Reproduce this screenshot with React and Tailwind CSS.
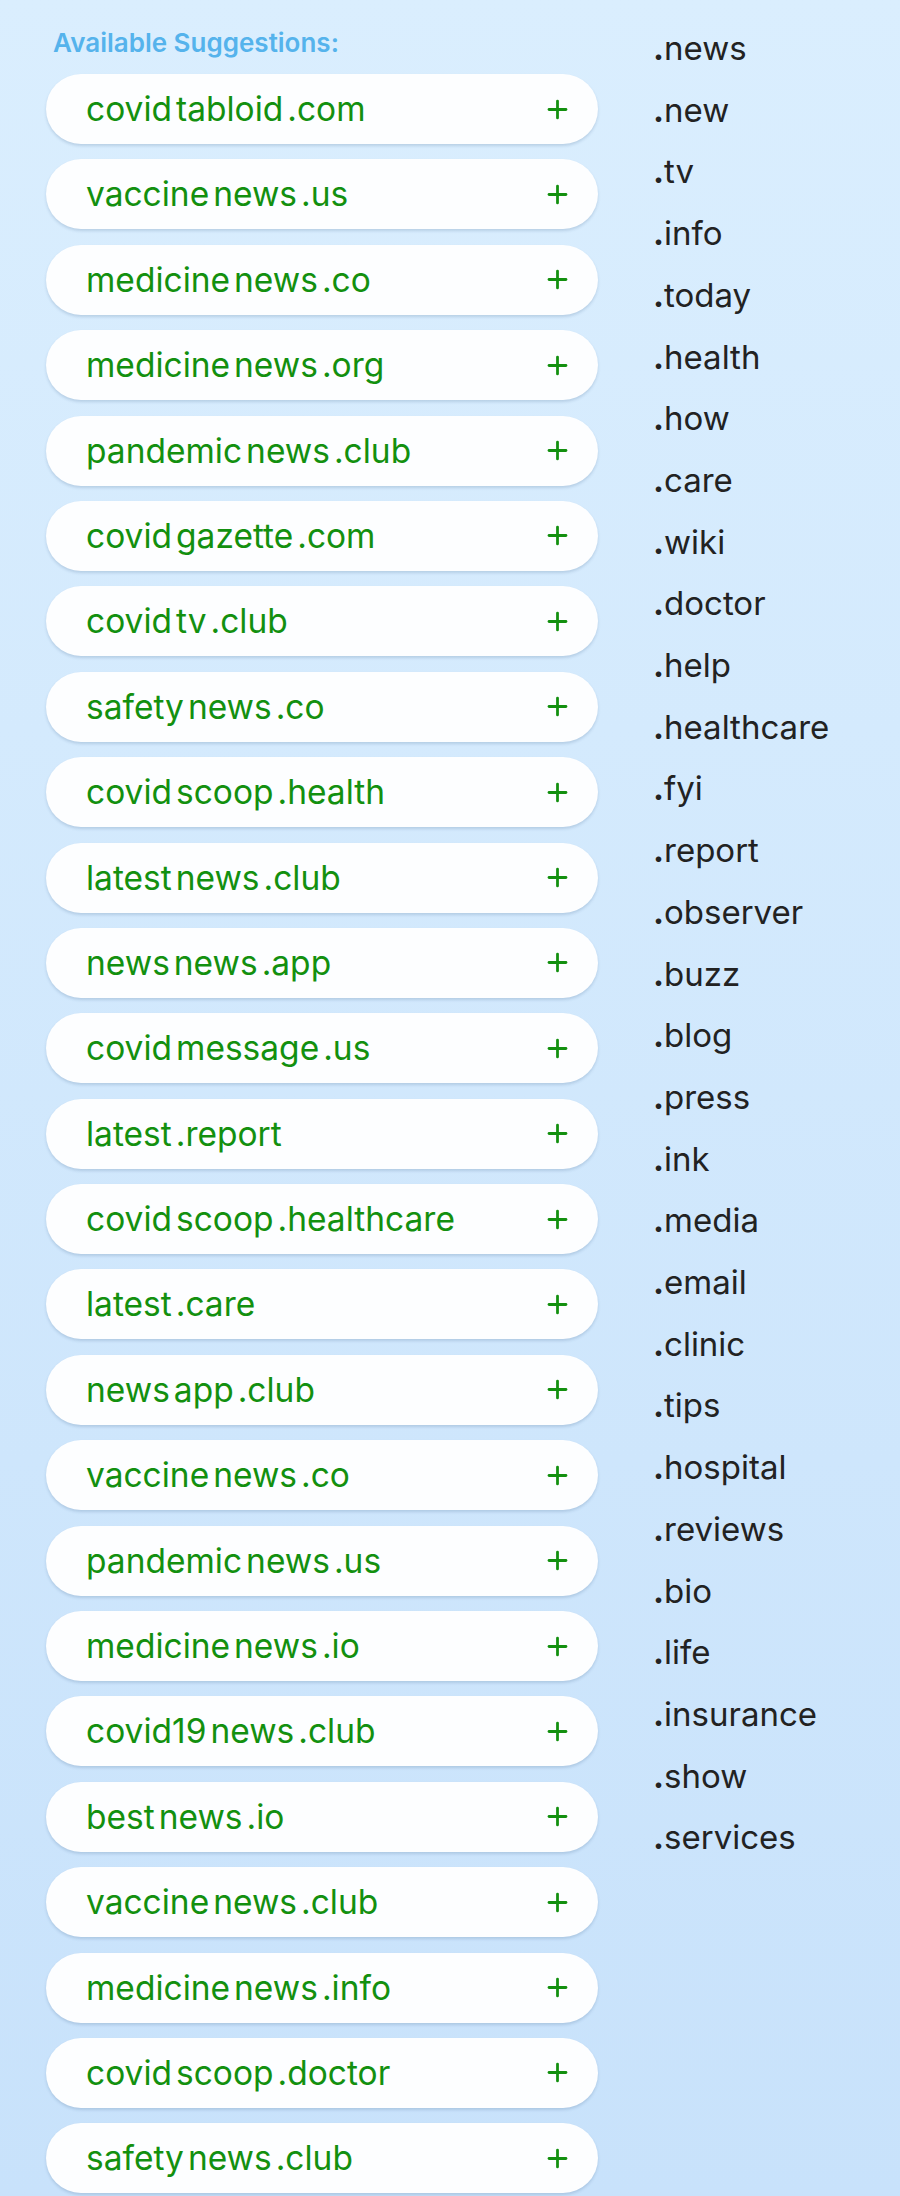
import React from "react";
import { Plus } from "lucide-react";

const suggestions = [
  ["covid", "tabloid", ".com"],
  ["vaccine", "news", ".us"],
  ["medicine", "news", ".co"],
  ["medicine", "news", ".org"],
  ["pandemic", "news", ".club"],
  ["covid", "gazette", ".com"],
  ["covid", "tv", ".club"],
  ["safety", "news", ".co"],
  ["covid", "scoop", ".health"],
  ["latest", "news", ".club"],
  ["news", "news", ".app"],
  ["covid", "message", ".us"],
  ["latest", ".report"],
  ["covid", "scoop", ".healthcare"],
  ["latest", ".care"],
  ["news", "app", ".club"],
  ["vaccine", "news", ".co"],
  ["pandemic", "news", ".us"],
  ["medicine", "news", ".io"],
  ["covid19", "news", ".club"],
  ["best", "news", ".io"],
  ["vaccine", "news", ".club"],
  ["medicine", "news", ".info"],
  ["covid", "scoop", ".doctor"],
  ["safety", "news", ".club"],
];

const tlds = [
  "news", "new", "tv", "info", "today", "health", "how", "care", "wiki", "doctor",
  "help", "healthcare", "fyi", "report", "observer", "buzz", "blog", "press", "ink", "media",
  "email", "clinic", "tips", "hospital", "reviews", "bio", "life", "insurance", "show", "services",
];

function SuggestionPill({ parts }) {
  return (
    <button className="flex h-[70px] w-full items-center justify-between rounded-full bg-[#fdfeff] pl-[40px] pr-[26px] shadow-[0_2px_3px_rgba(40,80,120,0.18)]">
      <span className="flex text-[33.5px] leading-[40px] text-[#13900f]">
        {parts.map((p, i) => (
          <span key={i} className="mr-[4px]">
            {p}
          </span>
        ))}
      </span>
      <Plus className="h-[29px] w-[29px] text-[#13900f]" strokeWidth={2.3} />
    </button>
  );
}

export default function App() {
  return (
    <div className="min-h-[2196px] w-full bg-gradient-to-b from-[#daeefe] to-[#c8e2fb] font-['Inter','Liberation_Sans',sans-serif]">
      <div className="flex">
        {/* Suggestions */}
        <div className="ml-[46px] w-[552px] shrink-0">
          <h2 className="mt-[27px] pl-[7px] text-[26px] font-semibold leading-[31px] text-[#55b3ec]">
            Available Suggestions:
          </h2>
          <div className="mt-[16px] flex flex-col gap-[15.4px]">
            {suggestions.map((parts, i) => (
              <SuggestionPill key={i} parts={parts} />
            ))}
          </div>
        </div>

        {/* Extensions */}
        <ul className="ml-[55px] pt-[18px]">
          {tlds.map((t) => (
            <li key={t} className="text-[33px] leading-[61.7px] text-[#222]">
              <span className="font-bold">.</span>
              {t}
            </li>
          ))}
        </ul>
      </div>
    </div>
  );
}
